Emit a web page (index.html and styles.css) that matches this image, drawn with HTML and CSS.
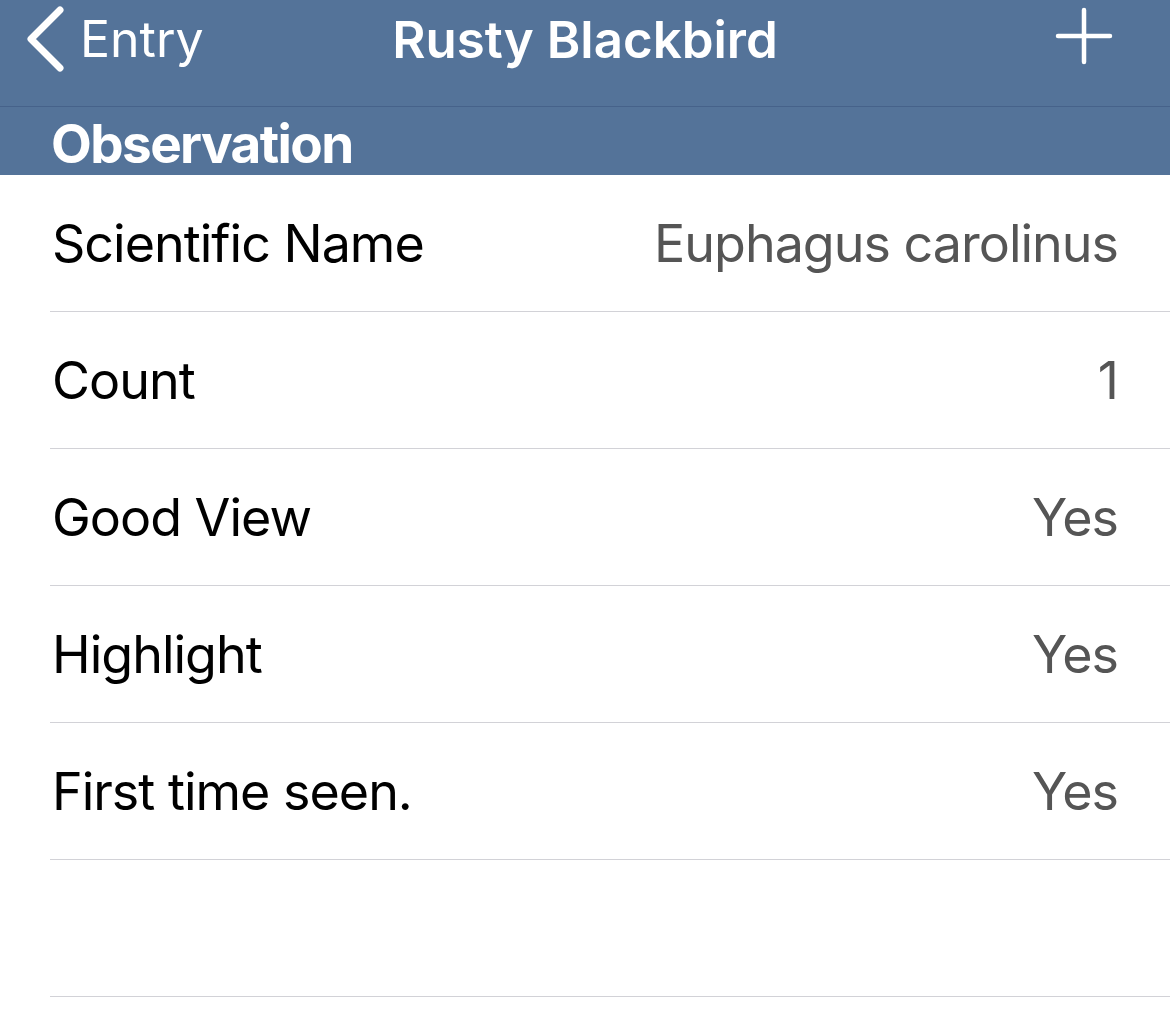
FILE: index.html
```html
<!DOCTYPE html>
<html>
<head>
<meta charset="utf-8">
<link rel="stylesheet" href="styles.css">
</head>
<body>
<div class="navbar">
  <div class="back">
    <svg class="chev" width="44" height="68" viewBox="0 0 44 68"><path d="M37 5 L8 34 L37 63" fill="none" stroke="#fff" stroke-width="7" stroke-linecap="round" stroke-linejoin="round"/></svg>
    <span class="back-label">Entry</span>
  </div>
  <div class="title">Rusty Blackbird</div>
  <div class="plus">
    <svg width="58" height="58" viewBox="0 0 58 58"><path d="M29 3 V55 M3 29 H55" fill="none" stroke="#fff" stroke-width="4.5" stroke-linecap="round"/></svg>
  </div>
</div>
<div class="section">Observation</div>
<div class="list">
  <div class="row"><span class="label">Scientific Name</span><span class="value">Euphagus carolinus</span></div>
  <div class="row"><span class="label">Count</span><span class="value">1</span></div>
  <div class="row"><span class="label">Good View</span><span class="value">Yes</span></div>
  <div class="row"><span class="label">Highlight</span><span class="value">Yes</span></div>
  <div class="row"><span class="label">First time seen.</span><span class="value">Yes</span></div>
  <div class="row"><span class="label"></span><span class="value"></span></div>
</div>
</body>
</html>
```
FILE: styles.css
```css
html, body { margin: 0; padding: 0; background: #fff; }
body { font-family: Inter, "Open Sans", sans-serif; width: 1170px; overflow: hidden; }
.navbar {
  height: 106px;
  background: #547399;
  border-bottom: 1px solid #46628a;
  display: flex;
  align-items: flex-start;
  justify-content: space-between;
  position: relative;
  color: #fff;
}
.back { display: flex; align-items: center; padding-left: 23px; height: 78px; }
.chev { display: block; }
.back-label { font-size: 50px; margin-left: 13px; letter-spacing: 0; }
.title {
  position: absolute; left: 0; right: 0; top: 0; height: 78px;
  display: flex; align-items: center; justify-content: center;
  font-size: 51px; font-weight: 600; pointer-events: none;
  padding-right: 0;
}
.plus { height: 78px; display: flex; align-items: center; padding-right: 57px; }
.plus svg { display: block; margin-top: -6px; }
.section {
  height: 68px; background: #547399; color: #fff;
  font-size: 53px; font-weight: 700; padding-left: 51px; letter-spacing: -1.6px;
  display: flex; align-items: center; box-sizing: border-box; padding-top: 6px;
}
.row {
  height: 136px; margin-left: 50px; border-bottom: 1px solid #d2d2d7;
  display: flex; align-items: center; justify-content: space-between;
  padding-right: 52px; padding-left: 2px;
  font-size: 52px; letter-spacing: -1px;
}
.label { color: #000; }
.value { color: #555; }
```
